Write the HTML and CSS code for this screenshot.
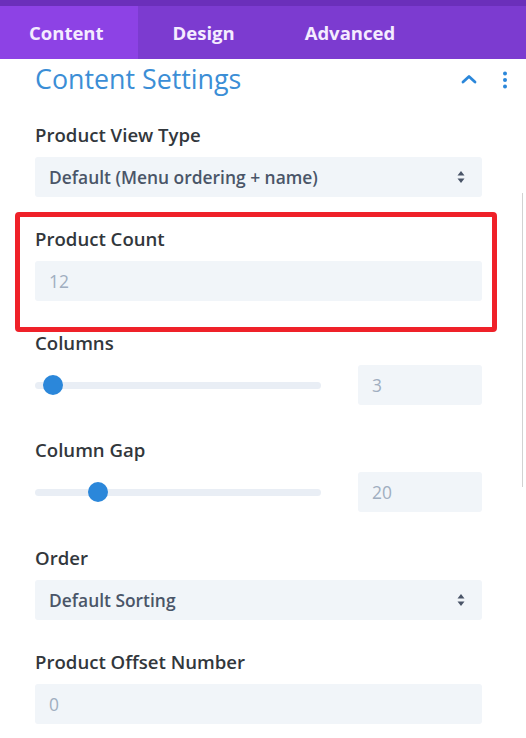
FILE: index.html
```html
<!DOCTYPE html>
<html lang="en">
<head>
<meta charset="utf-8">
<title>Content Settings</title>
<link rel="stylesheet" href="styles.css">
</head>
<body>
<div class="app">
  <nav class="tabs">
    <div class="tab tab-active">Content</div>
    <div class="tab">Design</div>
    <div class="tab">Advanced</div>
  </nav>
  <main class="panel">
    <header class="panel-head">
      <h1 class="panel-title">Content Settings</h1>
      <div class="head-actions">
        <svg class="icon-chevron" width="16" height="10" viewBox="0 0 16 10"><path d="M2 8 L8 2.5 L14 8" fill="none" stroke="#2b87da" stroke-width="2.8" stroke-linecap="round" stroke-linejoin="round"/></svg>
        <svg class="icon-dots" width="6" height="18" viewBox="0 0 6 18"><circle cx="3" cy="2.5" r="2" fill="#2b87da"/><circle cx="3" cy="9" r="2" fill="#2b87da"/><circle cx="3" cy="15.5" r="2" fill="#2b87da"/></svg>
      </div>
    </header>

    <section class="field">
      <label class="field-label">Product View Type</label>
      <div class="select">
        <span class="select-text">Default (Menu ordering + name)</span>
        <svg class="select-arrows" width="8" height="14" viewBox="0 0 8 14"><path d="M4 1 L7.5 5.5 H0.5 Z M4 13 L7.5 8.5 H0.5 Z" fill="#4a5568"/></svg>
      </div>
    </section>

    <section class="field field-highlight">
      <label class="field-label">Product Count</label>
      <div class="input"><span class="input-value">12</span></div>
    </section>

    <section class="field field-range">
      <label class="field-label">Columns</label>
      <div class="range-row">
        <div class="range">
          <div class="range-track"></div>
          <div class="range-thumb" style="left: 18px"></div>
        </div>
        <div class="input input-num"><span class="input-value">3</span></div>
      </div>
    </section>

    <section class="field field-range">
      <label class="field-label">Column Gap</label>
      <div class="range-row">
        <div class="range">
          <div class="range-track"></div>
          <div class="range-thumb" style="left: 63px"></div>
        </div>
        <div class="input input-num"><span class="input-value">20</span></div>
      </div>
    </section>

    <section class="field">
      <label class="field-label">Order</label>
      <div class="select">
        <span class="select-text">Default Sorting</span>
        <svg class="select-arrows" width="8" height="14" viewBox="0 0 8 14"><path d="M4 1 L7.5 5.5 H0.5 Z M4 13 L7.5 8.5 H0.5 Z" fill="#4a5568"/></svg>
      </div>
    </section>

    <section class="field">
      <label class="field-label">Product Offset Number</label>
      <div class="input"><span class="input-value">0</span></div>
    </section>
  </main>
  <div class="scroll-line"></div>
</div>
</body>
</html>
```

FILE: styles.css
```css
* { box-sizing: border-box; }

html, body {
  margin: 0;
  padding: 0;
  background: #ffffff;
}

body {
  font-family: "Open Sans", "Noto Sans", "Liberation Sans", sans-serif;
  color: #32373c;
  width: 526px;
  height: 738px;
  overflow: hidden;
}

.app {
  position: relative;
  height: 738px;
}

.tabs {
  display: flex;
  height: 59px;
  border-top: 6px solid #6b2fba;
  background: #7c3bd0;
}

.tab {
  padding: 0 35px;
  font-size: 18.5px;
  font-weight: 700;
  line-height: 53px;
  color: #f4ecff;
}

.tab-active {
  padding: 0 34px 0 29px;
  background: #8d42e5;
}

.panel {
  padding: 5px 44px 0 35px;
}

.panel-head {
  display: flex;
  align-items: center;
  justify-content: space-between;
  height: 30px;
}

.panel-title {
  margin: 0;
  font-size: 26.8px;
  font-weight: 400;
  line-height: 30px;
  color: #3b8ed6;
}

.head-actions {
  display: flex;
  align-items: center;
  gap: 25px;
  margin-right: -26px;
  margin-top: 2px;
}

.icon-chevron { display: block; margin-top: -3px; }
.icon-dots { display: block; }

.field {
  display: flex;
  flex-direction: column;
  margin-top: 29px;
}

.field + .field { margin-top: 30px; }
.field-range + .field { margin-top: 34px; }
.field-range + .field-range { margin-top: 33px; }

.field-label {
  font-size: 18.6px;
  font-weight: 600;
  line-height: 24px;
  color: #32373c;
  margin-bottom: 10px;
}

.select,
.input {
  display: flex;
  align-items: center;
  height: 40px;
  padding: 0 15px 0 14px;
  background: #f1f5f9;
  border-radius: 3px;
}

.select { justify-content: space-between; }

.select-text {
  font-size: 17.4px;
  font-weight: 600;
  color: #4a5568;
}

.select-arrows { display: block; margin-right: 2px; }

.input-value {
  font-size: 17.4px;
  font-weight: 400;
  color: #a0aec0;
}

.field-highlight { position: relative; }

.field-highlight::after {
  content: "";
  position: absolute;
  top: -15px;
  left: -20px;
  right: -15px;
  bottom: -31px;
  border: 5px solid #ef2129;
  border-radius: 4px;
  pointer-events: none;
}

.range-row {
  display: flex;
  align-items: center;
  justify-content: space-between;
}

.range {
  position: relative;
  width: 286px;
  height: 20px;
}

.range-track {
  position: absolute;
  left: 0;
  right: 0;
  top: 7px;
  height: 7px;
  border-radius: 4px;
  background: #e9eef5;
}

.range-thumb {
  position: absolute;
  top: 0;
  width: 20px;
  height: 20px;
  margin-left: -10px;
  border-radius: 50%;
  background: #2b87da;
}

.input-num { width: 124px; }

.scroll-line {
  position: absolute;
  left: 522px;
  top: 193px;
  width: 1px;
  height: 294px;
  background: #d2d2d2;
}
```
